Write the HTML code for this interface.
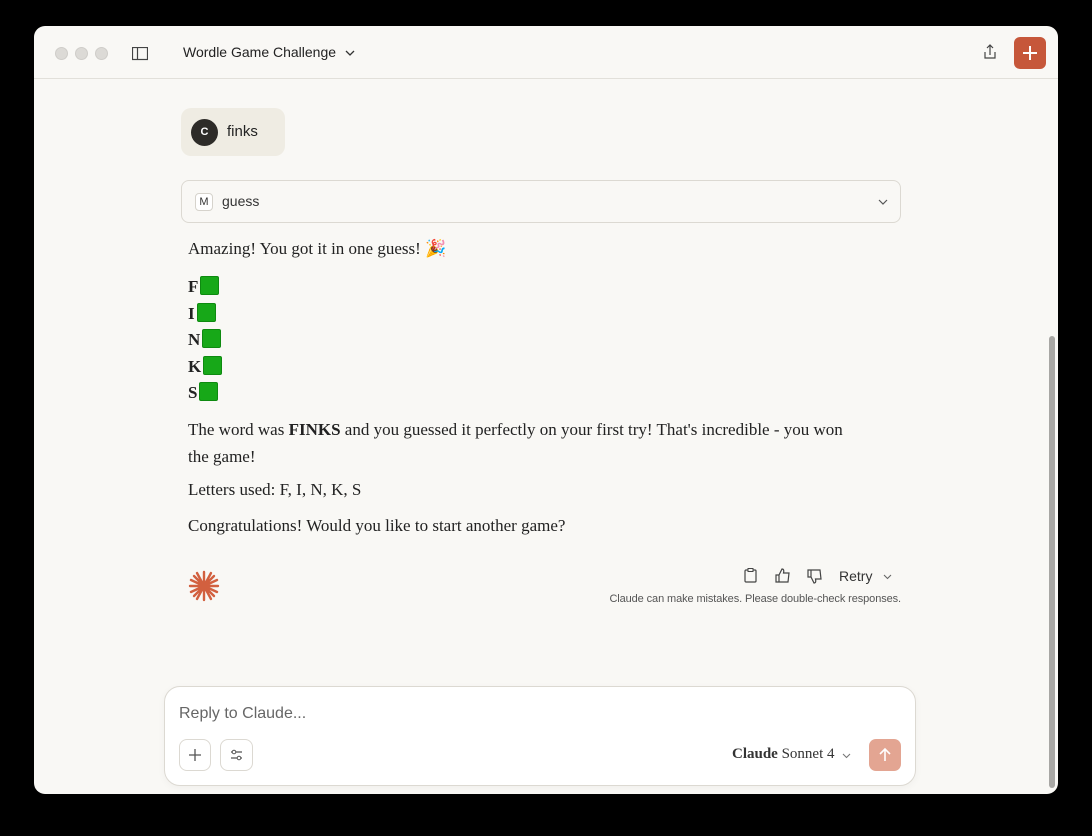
<!DOCTYPE html>
<html><head><style>
*{margin:0;padding:0;box-sizing:border-box}
body{width:1092px;height:836px;background:#000;position:relative;overflow:hidden;font-family:"Liberation Sans",sans-serif}
.win{position:absolute;left:34px;top:26px;width:1024px;height:768px;background:#f9f8f5;border-radius:11px;overflow:hidden}
.hdr{position:absolute;left:0;top:0;width:100%;height:53px;border-bottom:1px solid #e2e0da}
.dot{position:absolute;top:21px;width:13px;height:13px;border-radius:50%;background:#dcdad6;border:1px solid #cfcdc9}
.abs{position:absolute}
.serif{font-family:"Liberation Serif",serif;font-size:17px;color:#222}
.sq{display:inline-block;width:19px;height:19px;background:#17a818;border:1px solid #0e8a10;border-radius:2px;vertical-align:-3px;margin-left:2px}
</style></head><body>
<div class="win">
 <div class="hdr">
  <div class="dot" style="left:21px"></div><div class="dot" style="left:41px"></div><div class="dot" style="left:61px"></div>
  <svg class="abs" style="left:98px;top:21px" width="16" height="14"><rect x="0.5" y="0.5" width="15" height="12" fill="none" stroke="#444" stroke-width="1.2"/><line x1="5.5" y1="1" x2="5.5" y2="13" stroke="#444" stroke-width="1.2"/></svg>
  <div class="abs" style="left:149px;top:18px;font-size:14px;color:#222">Wordle Game Challenge</div>
  <svg class="abs" style="left:311px;top:24px" width="10" height="6"><path d="M1 1l4 4 4-4" fill="none" stroke="#333" stroke-width="1.3"/></svg>
  <svg class="abs" style="left:949px;top:18px" width="14" height="16"><path d="M7 1v10M4 4l3-3 3 3M2 8v6h10V8" fill="none" stroke="#444" stroke-width="1.2"/></svg>
  <div class="abs" style="left:980px;top:11px;width:32px;height:32px;background:#c6573a;border-radius:6px"><svg width="32" height="32"><path d="M16 9v14M9 16h14" stroke="#fff" stroke-width="2"/></svg></div>
 </div>
 <div class="abs" style="left:147px;top:82px;width:104px;height:48px;background:#efece3;border-radius:10px">
  <div class="abs" style="left:10px;top:11px;width:27px;height:27px;border-radius:50%;background:#2d2b28;color:#fff;font-size:11px;font-weight:bold;text-align:center;line-height:27px">C</div>
  <div class="abs" style="left:46px;top:15px;font-size:15px;color:#222">finks</div>
 </div>
 <div class="abs" style="left:147px;top:154px;width:720px;height:43px;border:1px solid #dcd9d2;border-radius:8px">
  <div class="abs" style="left:13px;top:12px;width:18px;height:18px;border:1px solid #d6d3cc;border-radius:4px;background:#fff;font-size:11px;text-align:center;line-height:16px;color:#333">M</div>
  <div class="abs" style="left:40px;top:12px;font-size:14px;color:#333">guess</div>
  <svg class="abs" style="left:696px;top:18px" width="10" height="6"><path d="M1 1l4 4 4-4" fill="none" stroke="#555" stroke-width="1.2"/></svg>
 </div>
 <div class="abs serif" style="left:154px;top:213px">Amazing! You got it in one guess! 🎉</div>
 <div class="abs serif" style="left:154px;top:248px;line-height:26.5px;font-weight:bold">F<span class="sq"></span><br>I<span class="sq"></span><br>N<span class="sq"></span><br>K<span class="sq"></span><br>S<span class="sq"></span></div>
 <div class="abs serif" style="left:154px;top:390px;width:666px;line-height:27px">The word was <b>FINKS</b> and you guessed it perfectly on your first try! That's incredible - you won the game!</div>
 <div class="abs serif" style="left:154px;top:454px">Letters used: F, I, N, K, S</div>
 <div class="abs serif" style="left:154px;top:490px">Congratulations! Would you like to start another game?</div>
 <svg class="abs" style="left:154px;top:544px" width="32" height="32"><g stroke="#d2603f" stroke-width="2.4" stroke-linecap="round"><path d="M16 2v28M2 16h28M6 6l20 20M26 6L6 26M9 3l14 26M23 3L9 29M3 10l26 12M29 10L3 22"/></g></svg>
 <svg class="abs" style="left:710px;top:542px" width="14" height="15"><rect x="1" y="2" width="11" height="12" rx="1" fill="none" stroke="#444" stroke-width="1.2"/><rect x="4" y="0.5" width="5" height="3" fill="#f9f8f5" stroke="#444"/></svg>
 <svg class="abs" style="left:741px;top:542px" width="16" height="15"><path d="M1 7h3v7H1zM4 7l3-6c2 0 2 2 1.5 4H14l-1 9H4" fill="none" stroke="#444" stroke-width="1.2"/></svg>
 <svg class="abs" style="left:773px;top:543px" width="16" height="15"><path d="M1 1h3v7H1zM4 8l3 6c2 0 2-2 1.5-4H14l-1-9H4" fill="none" stroke="#444" stroke-width="1.2"/></svg>
 <div class="abs" style="left:805px;top:542px;font-size:14px;color:#333">Retry</div>
 <svg class="abs" style="left:849px;top:548px" width="9" height="6"><path d="M1 1l3.5 3.5L8 1" fill="none" stroke="#666" stroke-width="1.1"/></svg>
 <div class="abs" style="left:551px;top:567px;width:316px;text-align:right;font-size:11px;color:#555;white-space:nowrap;letter-spacing:-0.1px">Claude can make mistakes. Please double-check responses.</div>
 <div class="abs" style="left:130px;top:660px;width:752px;height:100px;background:#fff;border:1px solid #dcd9d2;border-radius:16px;box-shadow:0 2px 8px rgba(0,0,0,0.04)">
  <div class="abs" style="left:14px;top:18px;font-size:16px;color:#666">Reply to Claude...</div>
  <div class="abs" style="left:14px;top:52px;width:32px;height:32px;border:1px solid #dcd9d2;border-radius:8px"><svg width="30" height="30"><path d="M15 9v12M9 15h12" stroke="#555" stroke-width="1.3"/></svg></div>
  <div class="abs" style="left:55px;top:52px;width:33px;height:32px;border:1px solid #dcd9d2;border-radius:8px"><svg width="31" height="30"><path d="M10 12h11M10 18h11" stroke="#555" stroke-width="1.2"/><circle cx="13" cy="12" r="1.8" fill="#fff" stroke="#555"/><circle cx="18" cy="18" r="1.8" fill="#fff" stroke="#555"/></svg></div>
  <div class="abs" style="left:567px;top:59px;font-family:'Liberation Serif',serif;font-size:15px;color:#333"><b style="font-weight:600">Claude</b> Sonnet 4</div>
  <svg class="abs" style="left:677px;top:66px" width="9" height="6"><path d="M1 1l3.5 3.5L8 1" fill="none" stroke="#777" stroke-width="1.1"/></svg>
  <div class="abs" style="left:704px;top:52px;width:32px;height:32px;background:#e3a592;border-radius:7px"><svg width="32" height="32"><path d="M16 22V10M11 15l5-5 5 5" fill="none" stroke="#fff" stroke-width="1.6"/></svg></div>
 </div>
 <div class="abs" style="left:1015px;top:310px;width:6px;height:452px;background:#a8a7a4;border-radius:3px"></div>
</div>
</body></html>
